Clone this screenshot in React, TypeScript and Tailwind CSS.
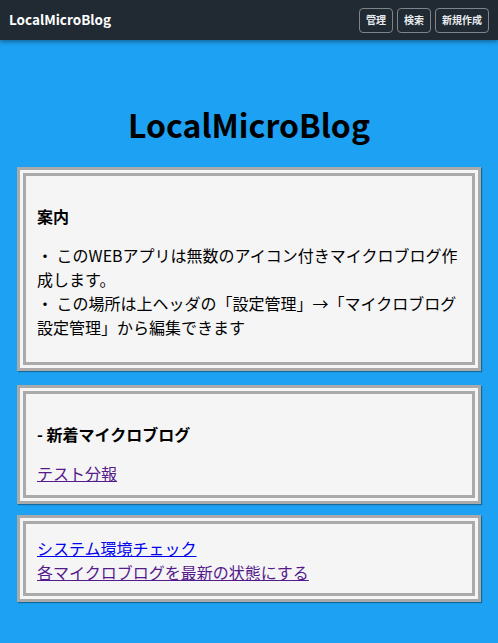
import React from "react";

const font = { fontFamily: '"Noto Sans CJK JP", "Noto Sans", sans-serif' };

function Card({ children, className }: { children: React.ReactNode; className: string }) {
  return (
    <div className="mx-[17px] border-[3px] border-[#aaaaaa] bg-[#f5f5f5] p-[3px] shadow-[1px_1px_1px_rgba(0,0,0,0.35)]">
      <div className={"border-[3px] border-[#aaaaaa] px-[11px] " + className}>{children}</div>
    </div>
  );
}

export default function App() {
  return (
    <div style={font} className="w-[498px] min-h-[643px] bg-[#1da1f2] text-black">
      <header className="relative z-10 flex h-[40px] items-center justify-between bg-[#212a33] pl-[9px] pr-[9px] shadow-[0_2px_4px_rgba(0,0,0,0.35)]">
        <div className="text-[13.5px] font-bold leading-none text-white">LocalMicroBlog</div>
        <div className="flex gap-[4px]">
          {["管理", "検索", "新規作成"].map((t) => (
            <button
              key={t}
              className="flex h-[25px] items-center rounded-[4px] border border-[#7d848b] px-[6px] text-[10px] font-bold leading-none text-[#e9ecef]"
            >
              {t}
            </button>
          ))}
        </div>
      </header>
      <main className="pt-[58px] pb-[41px]">
        <h1 className="text-center text-[32px] font-bold leading-[52px]">LocalMicroBlog</h1>
        <div className="mt-[17px] flex flex-col">
          <Card className="pt-[28px] pb-[23px]">
            <div className="text-[16px] font-bold leading-[24px]">案内</div>
            <p className="mt-[15px] text-[16px] leading-[24px] whitespace-nowrap">
              ・ このWEBアプリは無数のアイコン付きマイクロブログ作
              <br />
              成します。
              <br />
              ・ この場所は上ヘッダの「設定管理」→「マイクロブログ
              <br />
              設定管理」から編集できます
            </p>
          </Card>
          <div className="h-[14px]" />
          <Card className="pt-[28px] pb-[10px]">
            <div className="text-[16px] font-bold leading-[24px]">- 新着マイクロブログ</div>
            <div className="mt-[15px] text-[16px] leading-[24px]">
              <a href="#" className="text-[#551a8b] underline">テスト分報</a>
            </div>
          </Card>
          <div className="h-[11px]" />
          <Card className="pt-[12px] pb-[9px]">
            <div className="text-[16px] leading-[24px]">
              <a href="#" className="text-[#0000ee] underline">システム環境チェック</a>
            </div>
            <div className="text-[16px] leading-[24px]">
              <a href="#" className="text-[#551a8b] underline">各マイクロブログを最新の状態にする</a>
            </div>
          </Card>
        </div>
      </main>
    </div>
  );
}
